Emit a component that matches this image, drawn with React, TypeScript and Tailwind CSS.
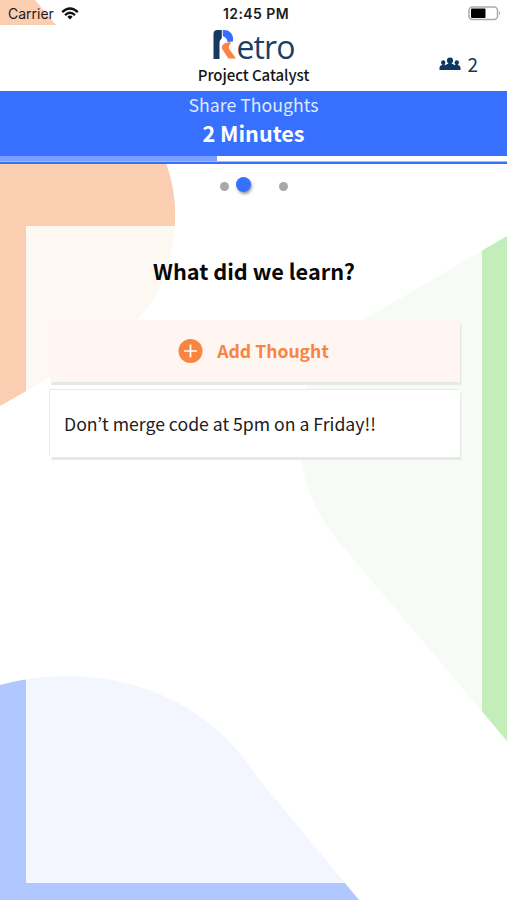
import React from "react";

const sans = "font-['Noto_Sans_CJK_KR','Noto_Sans',sans-serif]";

function Backdrop() {
  return (
    <svg className="absolute inset-0 -z-10" width="507" height="900" viewBox="0 0 507 900">
      <path
        fill="#fbcdb1"
        d="M0 0H35L56 25L145 126C155 138 161 149 166 163C173 182 176 203 175 222C173 265 160 296 137 320C122 335 104 347 86 357L0 406Z"
      />
      <path
        fill="#c3eeb9"
        d="M507 236L363 320C330 339 299 380 299 430C299 475 313 511 338 541L507 741Z"
      />
      <path
        fill="#afc6ff"
        d="M0 685Q32 676 68 676C135 676 190 702 228 740C241 754 252 770 263 784L359 900H0Z"
      />
    </svg>
  );
}

function StatusBar() {
  return (
    <div className="flex h-[25px] items-center pl-2 pr-[6px] font-[Inter,sans-serif] text-[#1c1c1c]">
      <div className="flex flex-1 items-center gap-[7px]">
        <span className="mt-[2px] text-[14px] leading-5">Carrier</span>
        <svg className="mt-[1px]" width="18" height="13" viewBox="0 0 18 13" fill="none" stroke="#111" strokeWidth="2.3">
          <path d="M1.2 5.2Q9-2.3 16.8 5.2" />
          <path d="M4 8.1Q9 3.4 14 8.1" />
          <path d="M9 12.4L6.3 9.7Q9 7.4 11.7 9.7Z" fill="#111" stroke="none" />
        </svg>
      </div>
      <span className="ml-[3px] mt-[3px] text-[14px] font-semibold leading-5 tracking-[0.4px]">12:45 PM</span>
      <div className="flex flex-1 justify-end">
        <svg className="mt-[1px]" width="33" height="15" viewBox="0 0 33 15">
          <rect x="1" y="1" width="28.5" height="12.600" rx="3.5" fill="#fff" stroke="#aaa" strokeWidth="1.5" />
          <rect x="3" y="2.600" width="14.500" height="9.400" rx="1" fill="#000" />
          <path d="M31 5.300Q33 7.300 31 9.300Z" fill="#999" />
        </svg>
      </div>
    </div>
  );
}

function Logo() {
  return (
    <div className="flex h-[33px] w-[82px] items-start">
      <svg className="mt-[4px] shrink-0" width="24" height="31" viewBox="0 0 24 31">
        <path fill="#153a61" d="M0.500 30V5Q0.500 1 4.500 1H8.800V9Q6.500 11 6.500 15V30Z" />
        <path fill="#356eff" d="M9.800 1C17 0.500 21 5.500 20 12.500L14.500 13Q14.500 9 9.800 7Z" />
        <path fill="#f98340" d="M9.500 16Q12.500 12.500 18.500 13.500Q14.500 17.500 16.500 20.500L23 29.500H15.500L9.800 21Q8 18.500 9.500 16Z" />
      </svg>
      <span className="mt-[3px] font-['Open_Sans',sans-serif] text-[32px] leading-[37px] tracking-[-0.9px] text-[#1b4068]">
        etro
      </span>
    </div>
  );
}

function People() {
  return (
    <svg width="22" height="14" viewBox="0 0 22 14" fill="#0f3860">
      <circle cx="11" cy="3.500" r="3.100" />
      <circle cx="4.200" cy="5.500" r="2.200" />
      <circle cx="17.800" cy="5.500" r="2.200" />
      <path d="M0.500 13V10.500Q0.500 8.500 3 8L3.500 7H5L6.500 8.200Q7.500 7 9.500 6.500V5.500H12.500V6.500Q14.500 7 15.500 8.200L17 7H18.500L19 8Q21.500 8.500 21.500 10.500V13Z" />
    </svg>
  );
}

export default function App() {
  return (
    <div className={`relative isolate flex h-[900px] w-[507px] flex-col overflow-hidden bg-white ${sans}`}>
      <Backdrop />
      <StatusBar />

      <header className="grid h-[66px] grid-cols-[1fr_auto_1fr] bg-white">
        <div />
        <div className="flex flex-col items-center">
          <Logo />
          <h1 className="mt-[7px] text-[15px] font-medium leading-5 tracking-[-0.05px] text-[#161616]">Project Catalyst</h1>
        </div>
        <div className="mt-[27px] flex h-6 items-center justify-end gap-[6px] pr-[29px] text-[#153a61]">
          <People />
          <span className="text-[19px] leading-6">2</span>
        </div>
      </header>

      <section className="flex h-[65px] flex-col items-center bg-[#376fff] text-white">
        <p className="mt-[1px] text-[17.700px] leading-6 text-[#dfe9ff]">Share Thoughts</p>
        <p className="mt-[3px] text-[21.600px] font-bold leading-7">2 Minutes</p>
      </section>
      <div className="flex h-[5px] bg-white">
        <div className="w-[217px] bg-[#7b9fff]" />
      </div>
      <div className="h-[3px] border-t border-[#9db9ff] bg-[#376fff]" />

      <nav className="flex h-[44px] items-center pl-[220px]">
        <span className="h-[9px] w-[9px] rounded-full bg-[#a8a8a8]" />
        <span className="-mt-[3px] ml-[7px] h-[15px] w-[15px] rounded-full bg-[#376fff] shadow-[1px_2px_3px_rgba(0,0,0,0.4)]" />
        <span className="ml-[28px] h-[9px] w-[9px] rounded-full bg-[#a8a8a8]" />
      </nav>

      <main className="ml-[26px] mt-[18px] h-[657px] w-[455.500px] bg-white/85 pl-6">
        <h2 className="h-[94px] w-[408px] pt-[31px] text-center text-[21.700px] font-bold leading-7 text-[#080808]">
          What did we learn?
        </h2>
        <button className="flex h-[62px] w-[410px] items-center justify-center gap-[14px] bg-[#fff6f2] pr-[3px] shadow-[1.5px_3px_0_#e6eae5]">
          <svg width="25" height="25" viewBox="0 0 25 25">
            <circle cx="12.500" cy="12" r="12" fill="#fa8540" />
            <path d="M12.500 5.500V18.500M6 12H19" stroke="#fff" strokeWidth="1.700" />
          </svg>
          <span className="-mt-[1px] text-[17.600px] font-bold leading-6 text-[#f98440]">Add Thought</span>
        </button>
        <article className="mt-[8px] flex h-[67px] w-[410px] items-center bg-white pl-[14px] shadow-[1.5px_3px_0_#e6e9e6,-1px_-1px_0_#e8eae8]">
          <p className="text-[17.650px] leading-6 text-[#202020]">Don’t merge code at 5pm on a Friday!!</p>
        </article>
      </main>
    </div>
  );
}
